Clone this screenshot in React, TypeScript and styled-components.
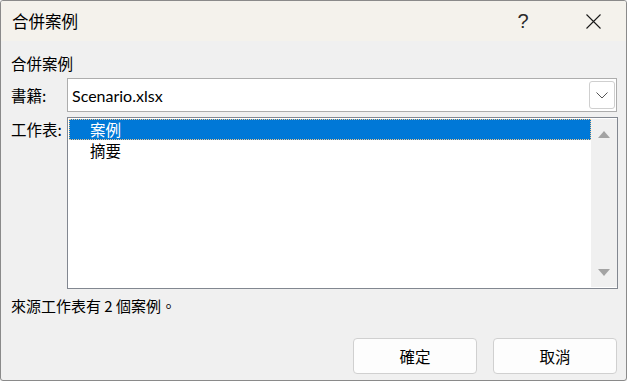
import * as React from 'react';
import styled, { createGlobalStyle } from 'styled-components';

const GlobalStyle = createGlobalStyle`
    html, body {
        margin: 0;
        padding: 0;
        background: #f0f0f0;
    }
    * {
        box-sizing: border-box;
    }
`;

const CJK = `"Noto Sans CJK TC", "Noto Sans", sans-serif`;
const LATIN = `Lato, "Noto Sans CJK TC", sans-serif`;

const sheets = ['案例', '摘要'];

const ArrowIcon = ({ down }: { down?: boolean }) => (
    <svg width="12" height="8" viewBox="0 0 12 8">
        <polygon points={down ? '0,0 12,0 6,7' : '0,7 12,7 6,0'} fill="#a3a3a3" />
    </svg>
);

const App = () => {
    const [selected, setSelected] = React.useState(0);

    return (
        <>
            <GlobalStyle />
            <Window>
                <TitleBar>
                    <Title>合併案例</Title>
                    <HelpButton>?</HelpButton>
                    <CloseButton>
                        <svg width="15" height="15" viewBox="0 0 15 15">
                            <path d="M0.5 0.5 L14.5 14.5 M14.5 0.5 L0.5 14.5" stroke="#1a1a1a" strokeWidth="1.1" />
                        </svg>
                    </CloseButton>
                </TitleBar>
                <Body>
                    <GroupLabel>合併案例</GroupLabel>
                    <FieldGrid>
                        <FieldLabel>書籍:</FieldLabel>
                        <Combo>
                            <ComboText>Scenario.xlsx</ComboText>
                            <DropButton>
                                <svg width="12" height="7" viewBox="0 0 12 7">
                                    <path d="M0.5 0.5 L6 6 L11.5 0.5" stroke="#555" strokeWidth="1" fill="none" />
                                </svg>
                            </DropButton>
                        </Combo>
                        <FieldLabel $top>工作表:</FieldLabel>
                        <ListBox>
                            <Items>
                                {sheets.map((name, i) => (
                                    <Item key={name} $active={i === selected} onClick={() => setSelected(i)}>
                                        {name}
                                    </Item>
                                ))}
                            </Items>
                            <ScrollBar>
                                <ArrowIcon />
                                <ArrowIcon down />
                            </ScrollBar>
                        </ListBox>
                    </FieldGrid>
                    <Note>來源工作表有 2 個案例。</Note>
                    <ButtonRow>
                        <Button>確定</Button>
                        <Button>取消</Button>
                    </ButtonRow>
                </Body>
            </Window>
        </>
    );
};

const Window = styled.div`
    width: 627px;
    height: 381px;
    border: 1px solid #8a8a8a;
    border-radius: 3px;
    background: #f0f0f0;
    display: flex;
    flex-direction: column;
    overflow: hidden;
    font-family: ${CJK};
    color: #000;
`;

const TitleBar = styled.div`
    height: 40px;
    background: #f4f2ec;
    display: flex;
    align-items: center;
    padding-left: 11px;
`;

const Title = styled.div`
    flex: 1;
    font-size: 16.5px;
    line-height: 22px;
`;

const HelpButton = styled.div`
    width: 74px;
    height: 40px;
    display: flex;
    align-items: center;
    justify-content: center;
    font-family: "Liberation Sans", sans-serif;
    font-size: 20px;
    color: #2a2a2a;
`;

const CloseButton = styled.div`
    width: 66px;
    height: 40px;
    display: flex;
    align-items: center;
    justify-content: center;
`;

const Body = styled.div`
    flex: 1;
    display: flex;
    flex-direction: column;
    padding: 11px 8px 0 10px;
`;

const GroupLabel = styled.div`
    font-size: 15.5px;
    line-height: 22px;
    margin-bottom: 4px;
`;

const FieldGrid = styled.div`
    display: grid;
    grid-template-columns: 56px 1fr;
    row-gap: 5px;
`;

const FieldLabel = styled.div<{ $top?: boolean }>`
    font-size: 15.5px;
    line-height: 22px;
    align-self: ${(p) => (p.$top ? 'start' : 'center')};
    padding-top: ${(p) => (p.$top ? '1px' : '0')};
`;

const Combo = styled.div`
    height: 34px;
    margin-right: 1px;
    background: #fff;
    border: 1px solid #adadad;
    display: flex;
    align-items: center;
    padding: 0 1px 0 4px;
`;

const ComboText = styled.div`
    flex: 1;
    font-family: ${LATIN};
    font-size: 16px;
`;

const DropButton = styled.div`
    width: 26px;
    height: 28px;
    border: 1px solid #cfcfcf;
    border-radius: 3px;
    display: flex;
    align-items: center;
    justify-content: center;
`;

const ListBox = styled.div`
    height: 172px;
    background: #fff;
    border: 1px solid #828790;
    display: flex;
    padding: 1px 0 1px 1px;
`;

const Items = styled.div`
    flex: 1;
`;

const Item = styled.div<{ $active?: boolean }>`
    height: 21px;
    line-height: 21px;
    font-size: 15.5px;
    padding-left: 21px;
    background: ${(p) => (p.$active ? '#0078d7' : 'transparent')};
    color: ${(p) => (p.$active ? '#fff' : '#000')};
    outline: ${(p) => (p.$active ? '1px dotted #f3c58a' : 'none')};
    outline-offset: -1px;
    cursor: default;
`;

const ScrollBar = styled.div`
    width: 26px;
    background: #f0f0f0;
    display: flex;
    flex-direction: column;
    align-items: center;
    justify-content: space-between;
    padding: 12px 0 10px;
`;

const Note = styled.div`
    font-size: 15px;
    line-height: 22px;
    margin-top: 6px;
`;

const ButtonRow = styled.div`
    display: flex;
    justify-content: flex-end;
    gap: 16px;
    margin-top: 21px;
    padding-right: 1px;
`;

const Button = styled.button`
    width: 124px;
    height: 36px;
    background: #fdfdfd;
    border: 1px solid #d0d0d0;
    border-radius: 4px;
    font-family: ${CJK};
    font-size: 15.5px;
    color: #000;
    padding: 0;
`;

export default App;
